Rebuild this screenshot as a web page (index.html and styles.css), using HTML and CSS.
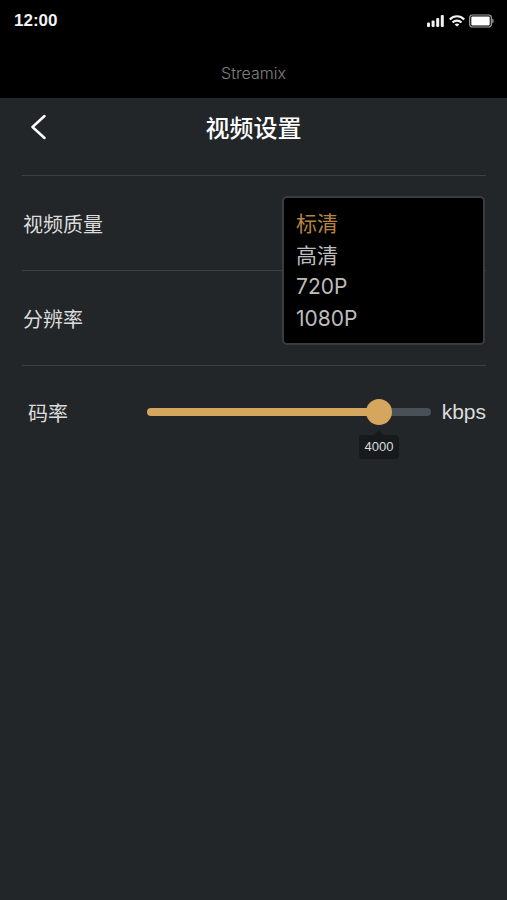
FILE: index.html
```html
<!DOCTYPE html>
<html lang="zh-CN">

<head>
     <meta charset="UTF-8">
     <meta name="viewport" content="width=device-width, initial-scale=1.0">
     <title>视频设置</title>
     <link rel="stylesheet" href="styles.css">
</head>

<body>
     <div class="top">
          <div class="statusbar">
               <span class="time">12:00</span>
               <div class="status-icons">
                    <svg width="18" height="14" viewBox="0 0 18 14" fill="#f2f2f2">
                         <rect x="0" y="8.500" width="3" height="4.500" rx="1" />
                         <rect x="4.600" y="6.500" width="3" height="6.500" rx="1" />
                         <rect x="9.200" y="4" width="3" height="9" rx="1" />
                         <rect x="13.800" y="1" width="3" height="12" rx="1" />
                    </svg>
                    <svg width="16" height="14" viewBox="0 0 16 14" fill="none" stroke="#f2f2f2" stroke-width="2.2">
                         <path d="M0.8 5.4C4.8 1.2 11.2 1.2 15.2 5.4" />
                         <path d="M3.5 8.6C6 6 10 6 12.500 8.600" />
                         <path d="M8 12.600L5.600 10.500C7 9.300 9 9.300 10.400 10.500Z" fill="#f2f2f2" stroke="none" />
                    </svg>
                    <svg width="25" height="14" viewBox="0 0 25 14">
                         <rect x="0.700" y="1" width="21.600" height="12" rx="2.500" fill="none" stroke="#a5a5a5" stroke-width="1.200" />
                         <rect x="2.300" y="2.600" width="18.400" height="8.800" rx="0.800" fill="#fff" />
                         <path d="M23.300 4.800V9.400C25 8.900 25 5.300 23.300 4.800Z" fill="#b5b5b5" />
                    </svg>
               </div>
          </div>
          <div class="appname">Streamix</div>
     </div>

     <header class="header">
          <button type="button" class="back" aria-label="返回">
               <svg width="16" height="26" viewBox="0 0 16 26" fill="none" stroke="#fff" stroke-width="2.500" stroke-linecap="round" stroke-linejoin="round">
                    <path d="M14.500 2L2.500 13L14.500 24" />
               </svg>
          </button>
          <h1>视频设置</h1>
     </header>

     <form class="settings">
          <div class="row">
               <label for="quality">视频质量</label>
               <select id="quality" class="menu" size="4">
                    <option selected>标清</option>
                    <option>高清</option>
                    <option>720P</option>
                    <option>1080P</option>
               </select>
          </div>
          <div class="row">
               <span class="name">分辨率</span>
          </div>
          <div class="row bitrate">
               <label for="bitrate">码率</label>
               <div class="slider" style="--pos: 0.85">
                    <input type="range" id="bitrate" min="0" max="4700" step="100" value="4000">
                    <output class="tip" for="bitrate">4000</output>
               </div>
               <span class="unit">kbps</span>
          </div>
     </form>
     <script>
          range = document.getElementById("bitrate");
          range.addEventListener("input", function() {
               range.parentElement.style.setProperty("--pos", range.value / range.max);
               document.querySelector(".tip").textContent = range.value;
          });
     </script>
</body>

</html>
```
FILE: styles.css
```css
* {
     box-sizing: border-box;
}

body {
     margin: 0;
     min-height: 100vh;
     background: #222628;
     color: #dcdcdc;
     font-family: "Liberation Sans", "Noto Sans CJK SC", sans-serif;
}

.top {
     height: 98px;
     background: #000;
}

.statusbar {
     display: flex;
     justify-content: space-between;
     align-items: center;
     height: 42px;
     padding: 0 13px 0 14px;
}

.time {
     color: #f2f2f2;
     font-size: 17px;
     font-weight: bold;
}

.status-icons {
     display: flex;
     gap: 4px;
}

.appname {
     color: #808080;
     font-family: Inter, sans-serif;
     font-size: 16px;
     font-weight: 300;
     line-height: 62px;
     text-align: center;
}

.header {
     display: grid;
     grid-template-columns: 40px 1fr 40px;
     align-items: center;
     height: 58px;
     padding: 0 18px;
}

.back {
     display: flex;
     justify-content: center;
     padding: 0;
     border: 0;
     background: none;
}

h1 {
     grid-column: 2;
     margin: 0;
     color: #fff;
     font-size: 24px;
     font-weight: 500;
     font-family: "Noto Sans CJK SC", sans-serif;
     line-height: 32px;
     text-align: center;
}

.settings {
     margin: 19px 21px 0 22px;
}

.row {
     position: relative;
     display: flex;
     align-items: center;
     height: 95px;
     padding-left: 1px;
     border-top: 1px solid #3d4042;
}

.row label,
.name {
     font-size: 20px;
}

/* open list lies over the row below it */
.menu {
     position: absolute;
     z-index: 1;
     top: 20px;
     right: 1px;
     width: 203px;
     height: 149px;
     padding: 8px 12px;
     overflow: hidden;
     border: 2px solid #3a3d3f;
     border-radius: 5px;
     outline: none;
     background: #000;
     color: #bdbdbd;
     font-family: Inter, "Noto Sans CJK SC", sans-serif;
     font-size: 21px;
     font-weight: 300;
}

.menu option {
     display: flex;
     align-items: center;
     height: 32px;
     padding: 0;
}

.menu option:checked {
     background: #000 linear-gradient(#000, #000);
     color: #b58442;
}

.bitrate {
     height: 93px;
     padding-left: 6px;
}

.slider {
     position: relative;
     flex: 1;
     margin: 0 11px 0 79px;
}

.slider input {
     display: block;
     width: 100%;
     height: 26px;
     margin: 0;
     appearance: none;
     background: none;
}

.slider input::-webkit-slider-runnable-track {
     height: 8px;
     border-radius: 4px;
     background: linear-gradient(to right, #d5a65d calc(100% * var(--pos)), #495058 0);
}

.slider input::-webkit-slider-thumb {
     width: 26px;
     height: 26px;
     margin-top: -9px;
     appearance: none;
     border-radius: 50%;
     background: #d5a65d;
}

.tip {
     position: absolute;
     top: 36px;
     left: calc(13px + (100% - 26px) * var(--pos));
     width: 40px;
     transform: translateX(-50%);
     border-radius: 4px;
     background: #171a1c;
     color: #dcdcdc;
     font-size: 13px;
     line-height: 24px;
     text-align: center;
}

.tip::before {
     content: "";
     position: absolute;
     bottom: 100%;
     left: 50%;
     margin-left: -5px;
     border: 5px solid transparent;
     border-bottom-color: #171a1c;
}

.unit {
     font-size: 21px;
}
```
